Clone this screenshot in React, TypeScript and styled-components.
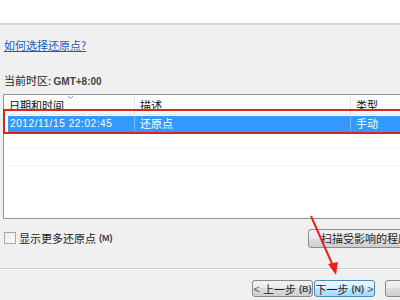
import React from 'react'
import styled, { createGlobalStyle } from 'styled-components'

const GlobalStyle = createGlobalStyle`
	html, body {
		margin: 0;
		padding: 0;
		background: #f0f0f0;
	}
	body {
		font-family: "Noto Sans CJK SC", "Liberation Sans", sans-serif;
		font-size: 11px;
		color: #1e1e1e;
	}
`

const Window = styled.div`
	position: relative;
	width: 400px;
	height: 300px;
	overflow: hidden;
	background: #f0f0f0;
`

const TopStrip = styled.div`
	height: 23px;
	background: #ffffff;
	border-bottom: 2px solid #d5d5d5;
`

const Body = styled.div`
	padding-left: 4px;
	display: flex;
	flex-direction: column;
`

const HelpLink = styled.a`
	margin-top: 13px;
	line-height: 14px;
	color: #1b5bb8;
	text-decoration: underline;
	align-self: flex-start;
`

const TimeZone = styled.div`
	margin-top: 21px;
	line-height: 14px;
	color: #222;

	b {
		font-family: "Liberation Sans", sans-serif;
		font-weight: 700;
		font-size: 10px;
		color: #444;
	}
`

const Table = styled.div`
	margin-top: 5px;
	margin-left: -1px;
	width: 410px;
	height: 123px;
	background: #ffffff;
	border: 1px solid #8f949c;
	display: flex;
	flex-direction: column;
`

const HeaderRow = styled.div`
	height: 19px;
	display: grid;
	grid-template-columns: 131px 216px 1fr;
	background: linear-gradient(#ffffff, #f6f7f9);
	border-bottom: 1px solid #e4e6ea;
`

const HeaderCell = styled.div`
	position: relative;
	padding: 3px 0 0 5px;
	line-height: 14px;
	color: #111;
	border-right: 1px solid #dfe2e7;
`

const SortMark = styled.svg`
	position: absolute;
	top: 0;
	left: 63px;
`

const DataRow = styled.div<{ $selected?: boolean }>`
	height: 15px;
	margin: 1px 0 0 4px;
	display: grid;
	grid-template-columns: 127px 216px 1fr;
	background: ${(p) => (p.$selected ? '#3399ff' : 'transparent')};
	color: ${(p) => (p.$selected ? '#ffffff' : '#111')};
	border-bottom: 1px solid ${(p) => (p.$selected ? '#3399ff' : '#f3f3f3')};
`

const DataCell = styled.div<{ $mono?: boolean }>`
	padding-left: ${(p) => (p.$mono ? '2px' : '5px')};
	line-height: 15px;
	font-family: ${(p) => (p.$mono ? '"Liberation Sans", sans-serif' : 'inherit')};
	font-size: ${(p) => (p.$mono ? '10px' : '11px')};
	letter-spacing: ${(p) => (p.$mono ? '0.6px' : '0')};
	border-right: 1px solid rgba(255, 255, 255, 0.35);
`

const OptionsRow = styled.div`
	margin-top: 10px;
	height: 18px;
	display: flex;
	align-items: center;
	justify-content: space-between;
`

const CheckLabel = styled.label`
	display: flex;
	align-items: center;
	gap: 3px;
	color: #222;
`

const CheckBox = styled.span`
	width: 10px;
	height: 10px;
	border: 1px solid #a9a9a9;
	background: linear-gradient(135deg, #e8e8e8, #ffffff);
`

const Accel = styled.span`
	font-family: "Liberation Sans", sans-serif;
	font-size: 9px;
	font-weight: 700;
	color: #444;
`

const Button = styled.button<{ $hot?: boolean }>`
	height: 17px;
	padding: 0 4px;
	font-family: "Noto Sans CJK SC", "Liberation Sans", sans-serif;
	font-size: 11px;
	line-height: 14px;
	color: #222;
	border-radius: 3px;
	border: 1px solid ${(p) => (p.$hot ? '#4a8ac4' : '#8a8a8a')};
	background: ${(p) =>
		p.$hot
			? 'linear-gradient(#eaf6fd, #d9f0fc 50%, #bee6fd 50%, #a7d9f5)'
			: 'linear-gradient(#f2f2f2, #ebebeb 50%, #dddddd 50%, #cfcfcf)'};
	white-space: nowrap;
	display: flex;
	align-items: center;
	justify-content: center;
	gap: 3px;
`

const ScanButton = styled(Button)`
	height: 19px;
	width: 110px;
	margin-right: -18px;
	padding-left: 12px;
	justify-content: flex-start;
`

const NavButton = styled(Button)`
	width: 61px;
	padding: 0;
`

const BlankButton = styled(Button)`
	width: 60px;
`

const Separator = styled.div`
	margin: 21px 0 0 -4px;
	height: 0;
	border-top: 1px solid #cfcfcf;
	border-bottom: 1px solid #ffffff;
`

const Footer = styled.div`
	margin-top: 10px;
	display: flex;
	justify-content: flex-end;
	margin-right: -45px;
`

const NavGroup = styled.div`
	display: flex;
	gap: 1px;
	margin-right: 10px;
`

const Chevron = styled.span`
	font-family: "Liberation Sans", sans-serif;
	color: #555;
`

const Highlight = styled.div`
	position: absolute;
	left: 3px;
	top: 109px;
	width: 410px;
	height: 21px;
	border: 2px solid #e0221f;
	pointer-events: none;
`

const Arrow = styled.svg`
	position: absolute;
	left: 0;
	top: 0;
	pointer-events: none;
`

const App: React.FC = () => {
	return (
		<Window>
			<GlobalStyle />
			<TopStrip />
			<Body>
				<HelpLink href="#">如何选择还原点?</HelpLink>
				<TimeZone>当前时区: <b>GMT+8:00</b></TimeZone>
				<Table>
					<HeaderRow>
						<HeaderCell>
							日期和时间
							<SortMark width="7" height="5" viewBox="0 0 7 5">
								<path d="M1 1 L3.5 3.5 L6 1" fill="none" stroke="#8a98b0" strokeWidth="1" />
							</SortMark>
						</HeaderCell>
						<HeaderCell>描述</HeaderCell>
						<HeaderCell>类型</HeaderCell>
					</HeaderRow>
					<DataRow $selected>
						<DataCell $mono>2012/11/15 22:02:45</DataCell>
						<DataCell>还原点</DataCell>
						<DataCell>手动</DataCell>
					</DataRow>
					<DataRow>
						<DataCell />
						<DataCell />
						<DataCell />
					</DataRow>
					<DataRow>
						<DataCell />
						<DataCell />
						<DataCell />
					</DataRow>
				</Table>
				<OptionsRow>
					<CheckLabel>
						<CheckBox />
						显示更多还原点<Accel>(M)</Accel>
					</CheckLabel>
					<ScanButton>扫描受影响的程序</ScanButton>
				</OptionsRow>
				<Separator />
				<Footer>
					<NavGroup>
						<NavButton><Chevron>&lt;</Chevron> 上一步<Accel>(B)</Accel></NavButton>
						<NavButton $hot>下一步<Accel>(N)</Accel> <Chevron>&gt;</Chevron></NavButton>
					</NavGroup>
					<BlankButton />
				</Footer>
			</Body>
			<Highlight />
			<Arrow width="400" height="300" viewBox="0 0 400 300">
				<line x1="311" y1="216" x2="333" y2="266" stroke="#e8231e" strokeWidth="2" />
				<path d="M336 275 L328 264 L338 262 Z" fill="#e8231e" />
			</Arrow>
		</Window>
	)
}

export default App
